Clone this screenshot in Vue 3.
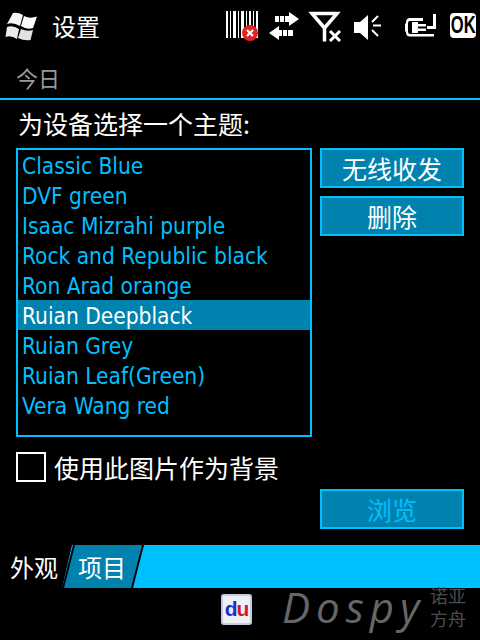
<script setup>
const themes = ['Classic Blue','DVF green','Isaac Mizrahi purple','Rock and Republic black','Ron Arad orange','Ruian Deepblack','Ruian Grey','Ruian Leaf(Green)','Vera Wang red']
</script>

<template>
  <div class="screen">
    <header class="status">
      <svg class="winlogo" width="40" height="32" viewBox="0 0 40 32">
        <path d="M11 2 Q16 1 21 4 L18 15 Q11 11 5 13 Z" fill="#f6f6f6"/>
        <path d="M22 5 Q28 8 35 5.500 L31 17 Q25 19 19 15 Z" fill="#ffffff"/>
        <path d="M5 16 Q11 14 17 18 L15 28 Q9 24 3.500 26 Z" fill="#ececec"/>
        <path d="M19 18 Q25 21 31 19 L28.500 29 Q22 30 16 27 Z" fill="#e2e2e2"/>
      </svg>
      <span class="title">设置</span>
      <div class="tray">
        <svg width="38" height="54" viewBox="224 0 38 54">
          <path d="M226 11h2v27h-2zM230 11h1v27h-1zM233 11h3v27h-3zM238 11h1v27h-1zM241 11h3v27h-3zM246 11h1v27h-1zM249 11h2v27h-2zM253 11h1v27h-1zM256 11h2v27h-2z" fill="#fff"/>
          <circle cx="250" cy="33" r="8" fill="#e32222"/>
          <path d="M247 30l6 6M253 30l-6 6" stroke="#fff" stroke-width="2.200"/>
        </svg>
        <svg width="40" height="54" viewBox="262 0 40 54">
          <path d="M275 16h4v6h-4zM280 16h4v6h-4zM285 16h4v-4l10 7-10 7v-4h-4z" fill="#fff"/>
          <path d="M293 30h-5v6h5zM287 30h-4v6h4zM282 30h-3v-4l-10 7 10 7v-4h3z" fill="#fff"/>
        </svg>
        <svg width="46" height="54" viewBox="302 0 46 54">
          <path d="M312 13.500h25L324.500 28 Z M324.500 28v13.500" fill="none" stroke="#fff" stroke-width="3.500"/>
          <path d="M330 31l10 10M340 31l-10 10" stroke="#fff" stroke-width="3"/>
        </svg>
        <svg width="38" height="54" viewBox="348 0 38 54">
          <path d="M354 22h6l8-7v25l-8-7h-6z" fill="#fff"/>
          <path d="M372 22l6-6M373 25.500h8M372 30l6 6" stroke="#fff" stroke-width="2"/>
        </svg>
        <svg width="60" height="54" viewBox="386 0 60 54">
          <path d="M410 18h13v3h-13q-2 0-2 2v9q0 2 2 2h24v2.500h-24q-4 0-4-4v-1h-1v-8h1v-1q0-4.500 4-4.500z" fill="#fff"/>
          <path d="M412 22h6v2h8v2.500h-8v2h8v2.500h-8v2h-6z" fill="#fff"/>
          <path d="M427 27.500h7.500V14" fill="none" stroke="#fff" stroke-width="3"/>
        </svg>
        <span class="ok"><span class="ok-text">OK</span></span>
      </div>
    </header>

    <div class="today">今日</div>

    <main class="body">
      <div class="prompt">为设备选择一个主题:</div>
      <div class="picker">
        <ul class="list">
          <li v-for="t in themes" :key="t" :class="{ sel: t === 'Ruian Deepblack' }">{{ t }}</li>
        </ul>
        <div class="actions">
          <button>无线收发</button>
          <button>删除</button>
        </div>
      </div>
      <label class="check">
        <span class="box"></span>
        <span>使用此图片作为背景</span>
      </label>
      <div class="browse-row">
        <button class="disabled">浏览</button>
      </div>
    </main>

    <nav class="tabs">
      <span class="tab-active">外观</span>
      <span class="tab-item"><span class="tab-shape"></span><span class="tab-text">项目</span></span>
    </nav>

    <footer class="foot">
      <div class="du"><span class="d">d</span><span class="u">u</span></div>
      <div class="brand">Dospy</div>
      <div class="brand-cn"><span>诺亚</span><span>方舟</span></div>
    </footer>
  </div>
</template>

<style>
html, body { margin: 0; background: #000; }
</style>

<style scoped>
.screen {
  width: 480px;
  height: 640px;
  background: #000;
  color: #fff;
  overflow: hidden;
  display: flex;
  flex-direction: column;
  font-family: "Noto Sans CJK SC", sans-serif;
}
.status {
  height: 54px;
  display: flex;
  align-items: center;
}
.winlogo { margin: 0 0 0 2px; flex: none; }
.title { font-size: 24px; margin-left: 10px; line-height: 54px; position: relative; top: -1px; }
.tray {
  margin-left: auto;
  display: flex;
  align-items: flex-start;
  height: 54px;
}
.tray svg { flex: none; display: block; }
.ok {
  margin: 13px 4px 0 4px;
  width: 26px;
  height: 25px;
  background: #fff;
  color: #000;
  border-radius: 4px;
  font: bold 23px/25px "Liberation Sans", sans-serif;
  text-align: center;
  overflow: hidden;
}
.ok-text { display: inline-block; transform: scaleX(0.72); margin-left: -6px; margin-right: -6px; }
.today {
  height: 44px;
  line-height: 46px;
  padding-left: 16px;
  font-size: 22px;
  color: #999;
  border-bottom: 2px solid #00bfff;
}
.body {
  flex: none;
  height: 445px;
  padding: 0 16px;
  box-sizing: border-box;
}
.prompt {
  height: 48px;
  line-height: 46px;
  font-size: 25px;
  padding-left: 2px;
  white-space: nowrap;
}
.picker { display: flex; gap: 8px; }
.list {
  list-style: none;
  margin: 0;
  padding: 0;
  width: 296px;
  height: 289px;
  box-sizing: border-box;
  border: 2px solid #00bfff;
  color: #00bfff;
  font: 22.500px/32px "DejaVu Sans Condensed", "DejaVu Sans", sans-serif;
}
.list li { height: 30px; padding-left: 4px; white-space: nowrap; }
.list li.sel { background: #0082ae; color: #fff; }
.actions { display: flex; flex-direction: column; gap: 8px; }
button {
  width: 144px;
  height: 40px;
  padding: 0;
  border: 2px solid #00bfff;
  background: #0082ae;
  color: #fff;
  font: 25px/32px "Noto Sans CJK SC", sans-serif;
}
.check {
  display: flex;
  align-items: center;
  gap: 8px;
  margin-top: 15px;
  height: 30px;
  font-size: 25px;
  line-height: 28px;
}
.box {
  width: 30px;
  height: 30px;
  box-sizing: border-box;
  border: 2px solid #fff;
}
.browse-row { display: flex; justify-content: flex-end; margin-top: 7px; }
button.disabled { color: #00bfff; }
.tabs {
  height: 43px;
  background: #00bfff;
  display: flex;
  position: relative;
}
.tab-active {
  width: 72px;
  background: #000;
  font-size: 24px;
  line-height: 44px;
  padding-left: 10px;
  box-sizing: border-box;
  clip-path: polygon(0 0, 72px 0, 62px 100%, 0 100%);
}
.tab-item { position: relative; width: 82px; margin-left: -10px; }
.tab-shape {
  position: absolute;
  inset: 0;
  background: #000;
  clip-path: polygon(11px 0, 82px 0, 71px 100%, 0 100%);
}
.tab-shape::after {
  content: "";
  position: absolute;
  inset: 0;
  background: #0082ae;
  clip-path: polygon(13px 0, 80px 0, 69px 100%, 2px 100%);
}
.tab-text {
  position: absolute;
  left: 16px;
  top: 0;
  font-size: 24px;
  line-height: 44px;
}
.foot {
  flex: 1;
  display: flex;
  position: relative;
  align-items: flex-start;
}
.du {
  width: 31px;
  height: 31px;
  margin: 6px 0 0 221px;
  box-sizing: border-box;
  border: 2px solid #c4cbe0;
  border-radius: 3px;
  background: #eef0f8;
  font: bold 21px/25px "Liberation Sans", sans-serif;
  text-align: center;
  letter-spacing: -1px;
}
.d { color: #1c2fd0; }
.u { color: #d8181c; }
.brand {
  margin-left: 30px;
  font: italic 400 42px/38px "Open Sans", sans-serif;
  color: #666;
  letter-spacing: 6px;
  white-space: nowrap;
}
.brand-cn {
  position: absolute;
  left: 430px;
  top: -2px;
  display: flex;
  flex-direction: column;
  font: 18px/23px "Liberation Sans", "Noto Sans CJK SC", sans-serif;
  color: #4c4c4c;
}
</style>
